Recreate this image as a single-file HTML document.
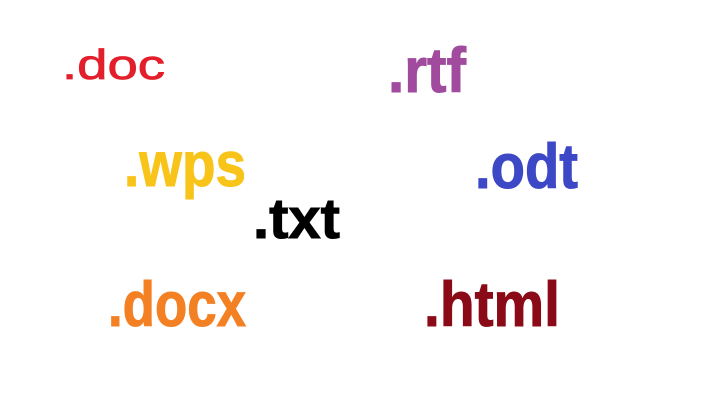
<!DOCTYPE html>
<html><head><meta charset="utf-8"><style>
html,body{margin:0;padding:0;background:#fff;width:713px;height:406px;overflow:hidden}
svg{display:block}
text{font-family:"Liberation Sans",sans-serif;font-weight:bold;stroke-width:1}
</style></head><body>
<svg width="713" height="406" viewBox="0 0 713 406" xmlns="http://www.w3.org/2000/svg">
<text x="62" y="79" font-size="42" style="font-weight:normal;stroke-width:0.8" fill="#e21f2b" stroke="#e21f2b" textLength="103" lengthAdjust="spacingAndGlyphs">.doc</text>
<text x="388" y="92" font-size="63" fill="#a04b9e" stroke="#a04b9e" textLength="78" lengthAdjust="spacingAndGlyphs">.rtf</text>
<text x="124" y="186" font-size="63" fill="#f8c41a" stroke="#f8c41a" textLength="122" lengthAdjust="spacingAndGlyphs">.wps</text>
<text x="475" y="188" font-size="63" fill="#3d48c6" stroke="#3d48c6" textLength="103" lengthAdjust="spacingAndGlyphs">.odt</text>
<text x="253" y="238" font-size="57" fill="#000" stroke="#000" textLength="87" lengthAdjust="spacingAndGlyphs">.txt</text>
<text x="108" y="326" font-size="63" fill="#f48024" stroke="#f48024" textLength="138" lengthAdjust="spacingAndGlyphs">.docx</text>
<text x="424" y="326" font-size="63" fill="#8a0b17" stroke="#8a0b17" textLength="136" lengthAdjust="spacingAndGlyphs">.html</text>
</svg>
</body></html>
